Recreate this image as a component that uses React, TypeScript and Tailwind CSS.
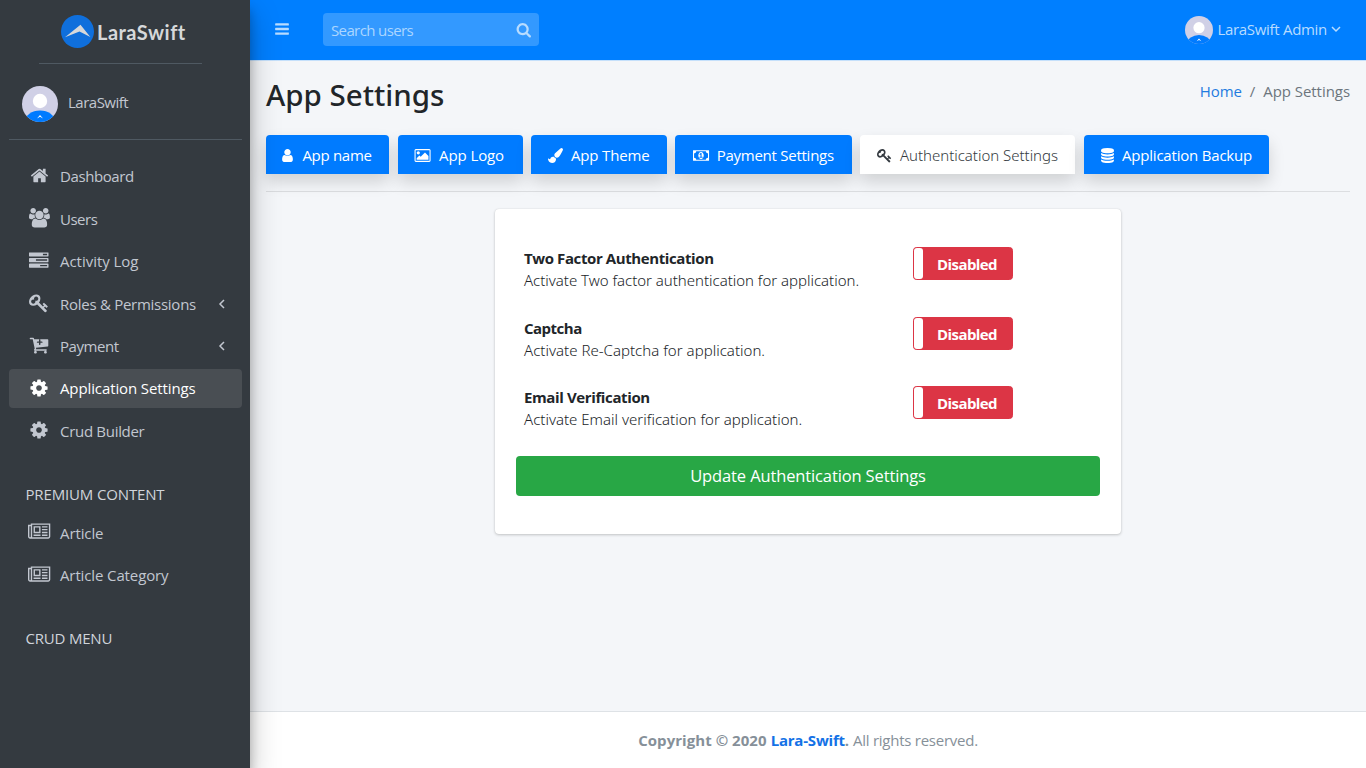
import { useState } from "react";

type IconData = { w: number; d: string };

const icons = {
  home: { w: 1792, d: "M1472 992v480q0 26-19 45t-45 19h-384v-384h-256v384h-384q-26 0-45-19t-19-45v-480q0-1 .5-3t.5-3l575-474 575 474q1 2 1 6zm223-69l-62 74q-8 9-21 11h-3q-13 0-21-7l-692-577-692 577q-12 8-24 7-13-2-21-11l-62-74q-8-10-7-23.5t11-21.5l719-599q32-26 76-26t76 26l244 204v-195q0-14 9-23t23-9h192q14 0 23 9t9 23v408l219 182q10 8 11 21.5t-7 23.5z" },
  users: { w: 1920, d: "M593 896q-162 5-265 128h-134q-82 0-138-40.5t-56-118.5q0-353 124-353 6 0 43.5 21t97.5 42.5 119 21.5q67 0 133-23-5 37-5 66 0 139 81 256zm1071 637q0 120-73 189.5t-194 69.5h-874q-121 0-194-69.5t-73-189.5q0-53 3.5-103.5t14-109 26.5-108.5 43-97.5 62-81 85.5-53.5 111.5-20q10 0 43 21.5t73 48 107 48 135 21.5 135-21.5 107-48 73-48 43-21.5q61 0 111.5 20t85.5 53.5 62 81 43 97.5 26.5 108.5 14 109 3.5 103.5zm-1024-1277q0 106-75 181t-181 75-181-75-75-181 75-181 181-75 181 75 75 181zm704 384q0 159-112.5 271.5t-271.5 112.5-271.5-112.5-112.5-271.5 112.5-271.5 271.5-112.5 271.5 112.5 112.5 271.5zm576 225q0 78-56 118.5t-138 40.5h-134q-103-123-265-128 81-117 81-256 0-29-5-66 66 23 133 23 59 0 119-21.5t97.5-42.5 43.5-21q124 0 124 353zm-128-609q0 106-75 181t-181 75-181-75-75-181 75-181 181-75 181 75 75 181z" },
  tasks: { w: 1792, d: "M1024 1408h640v-128h-640v128zm-384-512h1024v-128h-1024v128zm640-512h384v-128h-384v128zm512 832v256q0 26-19 45t-45 19h-1664q-26 0-45-19t-19-45v-256q0-26 19-45t45-19h1664q26 0 45 19t19 45zm0-512v256q0 26-19 45t-45 19h-1664q-26 0-45-19t-19-45v-256q0-26 19-45t45-19h1664q26 0 45 19t19 45zm0-512v256q0 26-19 45t-45 19h-1664q-26 0-45-19t-19-45v-256q0-26 19-45t45-19h1664q26 0 45 19t19 45z" },
  key: { w: 1792, d: "M832 512q0-80-56-136t-136-56-136 56-56 136q0 42 19 83-41-19-83-19-80 0-136 56t-56 136 56 136 136 56 136-56 56-136q0-42-19-83 41 19 83 19 80 0 136-56t56-136zm851 704q0 17-49 66t-66 49q-9 0-28.5-16t-36.5-33-38.5-40-24.5-26l-96 96 220 220q28 28 28 68 0 42-39 81t-81 39q-40 0-68-28l-671-671q-176 131-365 131-163 0-265.5-102.5t-102.5-265.5q0-160 95-313t248-248 313-95q163 0 265.5 102.5t102.5 265.5q0 189-131 365l355 355 96-96q-3-3-26-24.5t-40-38.5-33-36.5-16-28.5q0-17 49-66t66-49q13 0 23 10 6 6 46 44.5t82 79.5 86.5 86 73 78 28.5 41z" },
  cart: { w: 1792, d: "M1216 640q0-26-19-45t-45-19h-128v-128q0-26-19-45t-45-19-45 19-19 45v128h-128q-26 0-45 19t-19 45 19 45 45 19h128v128q0 26 19 45t45 19 45-19 19-45v-128h128q26 0 45-19t19-45zm-512 896q0 53-37.5 90.5t-90.5 37.5-90.5-37.5-37.5-90.5 37.5-90.5 90.5-37.5 90.5 37.5 37.5 90.5zm896 0q0 53-37.5 90.5t-90.5 37.5-90.5-37.5-37.5-90.5 37.5-90.5 90.5-37.5 90.5 37.5 37.5 90.5zm128-1088v512q0 24-16 42.5t-41 21.5l-1044 122q1 7 4.5 21.5t6 26.5 2.5 22q0 16-24 64h920q26 0 45 19t19 45-19 45-45 19h-1024q-26 0-45-19t-19-45q0-14 11-39.5t29.5-59.5 20.5-38l-177-823h-204q-26 0-45-19t-19-45 19-45 45-19h256q16 0 28.5 6.5t20 15.5 13 24.5 7.5 26.5 5.5 29.5 4.5 25.5h1201q26 0 45 19t19 45z" },
  cog: { w: 1792, d: "M1152 896q0-106-75-181t-181-75-181 75-75 181 75 181 181 75 181-75 75-181zm512-109v222q0 12-8 23t-20 13l-185 28q-19 54-39 91 35 50 107 138 10 12 10 25t-9 23q-27 37-99 108t-94 71q-12 0-26-9l-138-108q-44 23-91 38-16 136-29 186-7 28-36 28h-222q-14 0-24.5-8.5t-11.5-21.5l-28-184q-49-16-90-37l-141 107q-10 9-25 9-14 0-25-11-126-114-165-168-7-10-7-23 0-12 8-23 15-21 51-66.5t54-70.5q-27-50-41-99l-183-27q-13-2-21-12.5t-8-23.5v-222q0-12 8-23t19-13l186-28q14-46 39-92-40-57-107-138-10-12-10-24 0-10 9-23 26-36 98.5-107.5t94.5-71.5q13 0 26 10l138 107q44-23 91-38 16-136 29-186 7-28 36-28h222q14 0 24.5 8.5t11.5 21.5l28 184q49 16 90 37l142-107q9-9 24-9 13 0 25 10 129 119 165 170 7 8 7 22 0 12-8 23-15 21-51 66.5t-54 70.5q26 50 41 98l183 28q13 2 21 12.5t8 23.5z" },
  news: { w: 2048, d: "M1024 512h-384v384h384v-384zm128 640v128h-640v-128h640zm0-768v640h-640v-640h640zm640 768v128h-512v-128h512zm0-256v128h-512v-128h512zm0-256v128h-512v-128h512zm0-256v128h-512v-128h512zm-1536 960v-960h-128v960q0 26 19 45t45 19 45-19 19-45zm1664 0v-1088h-1536v1088q0 33-11 64h1483q26 0 45-19t19-45zm128-1216v1216q0 80-56 136t-136 56h-1664q-80 0-136-56t-56-136v-1088h256v-128h1792z" },
  user: { w: 1792, d: "M1536 1399q0 109-62.5 187t-150.5 78h-854q-88 0-150.5-78t-62.5-187q0-85 8.5-160.5t31.5-152 58.5-131 94-89 134.5-34.5q131 128 313 128t313-128q76 0 134.5 34.5t94 89 58.5 131 31.5 152 8.5 160.5zm-256-887q0 159-112.5 271.5t-271.5 112.5-271.5-112.5-112.5-271.5 112.5-271.5 271.5-112.5 271.5 112.5 112.5 271.5z" },
  image: { w: 2048, d: "M704 576q0 80-56 136t-136 56-136-56-56-136 56-136 136-56 136 56 56 136zm1024 384v448h-1408v-192l320-320 160 160 512-512zm96-704h-1600q-13 0-22.5 9.5t-9.5 22.5v1216q0 13 9.5 22.5t22.5 9.5h1600q13 0 22.5-9.5t9.5-22.5v-1216q0-13-9.5-22.5t-22.5-9.5zm160 32v1216q0 66-47 113t-113 47h-1600q-66 0-113-47t-47-113v-1216q0-66 47-113t113-47h1600q66 0 113 47t47 113z" },
  brush: { w: 1792, d: "M1615 0q70 0 122.5 46.5t52.5 116.5q0 63-45 151-332 629-465 752-97 91-218 91-126 0-216.5-92.5t-90.5-219.5q0-128 92-212l638-579q59-54 130-54zm-909 1034q39 76 106.5 130t150.5 76l1 71q4 213-129.5 347t-348.5 134q-123 0-218-46.5t-152.5-127.5-86.5-183-29-220q7 5 41 30t62 44.5 59 36.5 46 17q41 0 55-37 25-66 57.5-112.5t69.5-76 88-47.5 103-25.5 125-10.5z" },
  money: { w: 1920, d: "M768 1152h384v-96h-128v-448h-114l-148 137 77 80q42-37 55-57h2v288h-128v96zm512-256q0 70-21 142t-59.5 134-101.5 101-138 39-138-39-101.5-101-59.5-134-21-142 21-142 59.5-134 101.5-101 138-39 138 39 101.5 101 59.5 134 21 142zm512 256v-512q-106 0-181-75t-75-181h-1152q0 106-75 181t-181 75v512q106 0 181 75t75 181h1152q0-106 75-181t181-75zm128-832v1152q0 26-19 45t-45 19h-1792q-26 0-45-19t-19-45v-1152q0-26 19-45t45-19h1792q26 0 45 19t19 45z" },
  database: { w: 1792, d: "M896 768q237 0 443-43t325-127v170q0 69-103 128t-280 93.5-385 34.5-385-34.5-280-93.5-103-128v-170q119 84 325 127t443 43zm0 768q237 0 443-43t325-127v170q0 69-103 128t-280 93.5-385 34.5-385-34.5-280-93.5-103-128v-170q119 84 325 127t443 43zm0-384q237 0 443-43t325-127v170q0 69-103 128t-280 93.5-385 34.5-385-34.5-280-93.5-103-128v-170q119 84 325 127t443 43zm0-1152q208 0 385 34.5t280 93.5 103 128v128q0 69-103 128t-280 93.5-385 34.5-385-34.5-280-93.5-103-128v-128q0-69 103-128t280-93.5 385-34.5z" },
  search: { w: 1792, d: "M1216 832q0-185-131.5-316.5t-316.5-131.5-316.5 131.5-131.5 316.5 131.5 316.5 316.5 131.5 316.5-131.5 131.5-316.5zm512 832q0 52-38 90t-90 38q-54 0-90-38l-343-342q-179 124-399 124-143 0-273.5-55.5t-225-150-150-225-55.5-273.5 55.5-273.5 150-225 225-150 273.5-55.5 273.5 55.5 225 150 150 225 55.5 273.5q0 220-124 399l343 343q37 37 37 90z" },
  bars: { w: 1792, d: "M1664 1344v128q0 26-19 45t-45 19h-1408q-26 0-45-19t-19-45v-128q0-26 19-45t45-19h1408q26 0 45 19t19 45zm0-512v128q0 26-19 45t-45 19h-1408q-26 0-45-19t-19-45v-128q0-26 19-45t45-19h1408q26 0 45 19t19 45zm0-512v128q0 26-19 45t-45 19h-1408q-26 0-45-19t-19-45v-128q0-26 19-45t45-19h1408q26 0 45 19t19 45z" },
} satisfies Record<string, IconData>;

type IconName = keyof typeof icons;

function Icon({ name, className }: { name: IconName; className: string }) {
  const icon = icons[name];
  return (
    <svg viewBox={`0 0 ${icon.w} 1792`} className={`w-auto shrink-0 overflow-visible ${className}`} fill="currentColor" aria-hidden="true">
      <path d={icon.d} />
    </svg>
  );
}

function Avatar({ className }: { className: string }) {
  return (
    <svg viewBox="0 0 36 36" className={`shrink-0 rounded-full ${className}`} aria-hidden="true">
      <rect width="36" height="36" fill="#d0d0e6" />
      <circle cx="18" cy="15" r="7.2" fill="#fff" />
      <ellipse cx="18" cy="35.5" rx="15" ry="11" fill="#007bff" />
      <path d="M15 32.5 18 29l3 3.5-3-1.8z" fill="#fff" />
    </svg>
  );
}

type NavItem = { label: string; icon: IconName; track: string; size?: string; expandable?: boolean };

const mainNav: NavItem[] = [
  { label: "Dashboard", icon: "home", track: "tracking-[-0.4px]", size: "h-[19px]" },
  { label: "Users", icon: "users", track: "tracking-[-0.5px]", size: "h-[19.5px]" },
  { label: "Activity Log", icon: "tasks", track: "tracking-[-0.03px]", size: "h-[19.5px]" },
  { label: "Roles & Permissions", icon: "key", track: "tracking-[-0.27px]", expandable: true },
  { label: "Payment", icon: "cart", track: "tracking-[-0.45px]", expandable: true },
  { label: "Application Settings", icon: "cog", track: "tracking-[-0.11px]" },
  { label: "Crud Builder", icon: "cog", track: "tracking-[-0.3px]" },
];

const premiumNav: NavItem[] = [
  { label: "Article", icon: "news", track: "tracking-[-0.1px]", size: "h-[19.5px]" },
  { label: "Article Category", icon: "news", track: "tracking-[-0.12px]", size: "h-[19.5px]" },
];

function NavLink({ item, active, onSelect }: { item: NavItem; active: boolean; onSelect: () => void }) {
  return (
    <button
      onClick={onSelect}
      className={`flex h-[38.5px] w-full items-center rounded pr-4 pl-[15px] text-left ${active ? "bg-[#494e53] text-white" : "text-[#c2c7d0]"}`}
    >
      <span className="flex w-[30px] justify-center pb-[2px]">
        <Icon name={item.icon} className={item.size ?? "h-5"} />
      </span>
      <span className={`ml-1.5 flex-1 whitespace-nowrap ${item.track}`}>{item.label}</span>
      {item.expandable && (
        <svg viewBox="0 0 8 10" className="h-2.5 w-2" fill="none" stroke="currentColor" strokeWidth="1.5" aria-hidden="true">
          <path d="M6 1 2 5l4 4" />
        </svg>
      )}
    </button>
  );
}

function Sidebar() {
  const [current, setCurrent] = useState("Application Settings");
  const link = (item: NavItem) => (
    <NavLink key={item.label} item={item} active={current === item.label} onSelect={() => setCurrent(item.label)} />
  );
  return (
    <aside className="z-10 flex w-[250px] shrink-0 flex-col bg-[#343a40] px-2 pl-[9px] text-[#c2c7d0] shadow-[0_14px_28px_rgba(0,0,0,0.25),0_10px_10px_rgba(0,0,0,0.22)]">
      <div className="mx-[30px] flex h-16 w-[163px] shrink-0 items-center border-b border-[#4f5962] pl-[22px]">
        <svg viewBox="0 0 33 33" className="h-[33px] w-[33px] shrink-0" aria-hidden="true">
          <circle cx="16.5" cy="16.5" r="16.5" fill="#0f6fdc" />
          <path d="M4 22.3 19.5 9.8 29.3 22 18.5 16.6z" fill="#d6d8da" />
        </svg>
        <span className="ml-[3px] font-['Lato',sans-serif] text-[20px] leading-6 font-bold tracking-[0.5px] text-[#d6d8da]">LaraSwift</span>
      </div>
      <div className="flex h-[76px] shrink-0 items-center border-b border-[#4f5962] pt-[4px] pl-[13px]">
        <Avatar className="h-9 w-9" />
        <span className="ml-2.5 pb-[3px] tracking-[-0.5px]">LaraSwift</span>
      </div>
      <nav className="mt-[17.4px] flex flex-col gap-[3.9px]">{mainNav.map(link)}</nav>
      <h2 className="mt-[31.6px] pl-[16.5px] leading-6 tracking-[-0.15px] text-[#d0d4db]">PREMIUM CONTENT</h2>
      <nav className="mt-2 flex flex-col gap-[3.9px]">{premiumNav.map(link)}</nav>
      <h2 className="mt-[31.6px] pl-[16.5px] leading-6 tracking-[-0.2px] text-[#d0d4db]">CRUD MENU</h2>
    </aside>
  );
}

function Topbar() {
  return (
    <header className="flex h-[61px] shrink-0 items-center border-b border-[#c5e0fb] bg-[#007fff] pb-[2px] text-[#b8dcff]">
      <Icon name="bars" className="ml-[24px] h-4" />
      <label className="ml-[33px] flex h-[33px] w-[216px] items-center rounded bg-[#3399ff] px-2">
        <input placeholder="Search users" className="w-full min-w-0 flex-1 bg-transparent pt-[2px] tracking-[-0.62px] outline-none placeholder:text-[#acd6ff]" />
        <Icon name="search" className="mt-[2px] h-[15.5px]" />
      </label>
      <button className="mr-[25px] ml-auto flex items-center">
        <Avatar className="h-7 w-7 translate-y-px" />
        <span className="ml-1 tracking-[-0.3px]">LaraSwift Admin</span>
        <svg viewBox="0 0 10 8" className="ml-1 h-2 w-2.5" fill="none" stroke="currentColor" strokeWidth="1.5" aria-hidden="true">
          <path d="m1 2 4 4 4-4" />
        </svg>
      </button>
    </header>
  );
}

const tabs: { label: string; icon: IconName; width: string; gap: string; track: string }[] = [
  { label: "App name", icon: "user", width: "w-[123px] pr-[3px]", gap: "gap-[7px]", track: "tracking-[-0.3px]" },
  { label: "App Logo", icon: "image", width: "w-[125px] pr-[2px]", gap: "gap-2", track: "tracking-[-0.1px]" },
  { label: "App Theme", icon: "brush", width: "w-[135.5px]", gap: "gap-2", track: "tracking-[-0.15px]" },
  { label: "Payment Settings", icon: "money", width: "w-[176.5px]", gap: "gap-2", track: "tracking-[-0.25px]" },
  { label: "Authentication Settings", icon: "key", width: "w-[215px]", gap: "gap-2", track: "tracking-[-0.02px]" },
  { label: "Application Backup", icon: "database", width: "w-[185px]", gap: "gap-[7px]", track: "tracking-[-0.2px]" },
];

const settings = [
  { title: "Two Factor Authentication", text: "Activate Two factor authentication for application.", track: "tracking-[-0.4px]", textTrack: "tracking-[-0.02px]" },
  { title: "Captcha", text: "Activate Re-Captcha for application.", track: "tracking-[-0.5px]", textTrack: "tracking-[0.02px]" },
  { title: "Email Verification", text: "Activate Email verification for application.", track: "tracking-[-0.38px]", textTrack: "tracking-[0.01px]" },
];

function Toggle() {
  const [on, setOn] = useState(false);
  return (
    <button
      onClick={() => setOn(!on)}
      className={`flex h-[33px] w-[100px] items-stretch rounded-[3.5px] border font-bold tracking-[-0.6px] text-white ${on ? "flex-row-reverse border-[#28a745] bg-[#28a745]" : "border-[#dc3545] bg-[#dc3545]"}`}
    >
      <span className="w-[9px] rounded-[3px] bg-white" />
      <span className="flex-1 pr-[1px] text-center leading-[32.5px]">{on ? "Enabled" : "Disabled"}</span>
    </button>
  );
}

export default function App() {
  const [tab, setTab] = useState("Authentication Settings");
  return (
    <div className="flex h-screen overflow-hidden bg-[#f4f6f9] font-['Open_Sans','Noto_Sans',sans-serif] text-[15px] leading-[22.5px] text-[#212529]">
      <Sidebar />
      <div className="flex min-w-0 flex-1 flex-col">
        <Topbar />
        <main className="flex-1 px-4">
          <div className="flex h-[74px] justify-between">
            <h1 className="pt-[14px] font-['Noto_Sans',sans-serif] text-[29.5px] leading-10 font-medium">App Settings</h1>
            <div className="flex gap-2 pt-[18.5px] tracking-[-0.05px] text-[#6c757d]">
              <a href="#home" className="tracking-[-0.1px] text-[#1f7be0]">Home</a>
              <span>/</span>
              <span>App Settings</span>
            </div>
          </div>
          <div className="flex h-[57px] gap-[8.5px] border-b border-[#dcdee1]">
            {tabs.map((t) => (
              <button
                key={t.label}
                onClick={() => setTab(t.label)}
                className={`flex h-[39px] items-center justify-center rounded-t whitespace-nowrap shadow-[0_8px_16px_rgba(0,0,0,0.15)] ${t.width} ${t.gap} ${t.track} ${tab === t.label ? "bg-white font-['Noto_Sans',sans-serif] font-light text-[#343a40]" : "bg-[#007bff] text-white"}`}
              >
                <Icon name={t.icon} className="mt-[2px] h-[15px]" />
                <span className="pt-[2px]">{t.label}</span>
              </button>
            ))}
          </div>
          <section className="mx-auto mt-[17px] h-[325px] w-[626px] rounded bg-white px-[21px] pt-[38px] shadow-[0_0_1px_rgba(0,0,0,0.125),0_1px_3px_rgba(0,0,0,0.2)]">
            {settings.map((s) => (
              <div key={s.title} className="flex h-[69.6px] pl-2">
                <div className="w-[389px]">
                  <h3 className={`leading-[22px] font-bold ${s.track}`}>{s.title}</h3>
                  <p className={`font-['Noto_Sans',sans-serif] leading-[22px] font-light ${s.textTrack}`}>{s.text}</p>
                </div>
                <Toggle />
              </div>
            ))}
            <button className="h-10 w-full rounded bg-[#28a745] text-[16.5px] tracking-[-0.13px] text-white">Update Authentication Settings</button>
          </section>
        </main>
        <footer className="flex h-[57px] shrink-0 items-center justify-center gap-1 border-t border-[#dee2e6] bg-white text-[#869099]">
          <strong className="tracking-[0.05px]">Copyright © 2020</strong>
          <strong className="tracking-[-0.2px]"><a href="#lara-swift" className="text-[#1472e6]">Lara-Swift</a>.</strong>
          <span className="tracking-[-0.25px]">All rights reserved.</span>
        </footer>
      </div>
    </div>
  );
}
